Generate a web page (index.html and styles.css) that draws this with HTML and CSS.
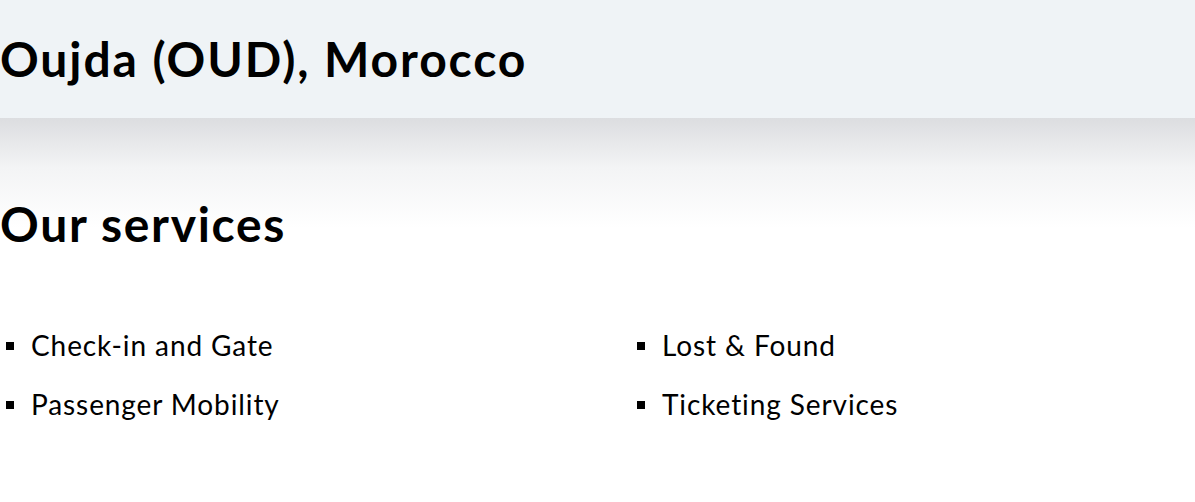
FILE: index.html
```html
<!DOCTYPE html>
<html lang="en">
<head>
<meta charset="utf-8">
<title>Oujda (OUD), Morocco</title>
<link rel="stylesheet" href="styles.css">
</head>
<body>
<header class="hero">
  <h1 class="hero-title">Oujda (OUD), Morocco</h1>
</header>
<main class="services">
  <h2 class="services-title">Our services</h2>
  <ul class="service-list">
    <li class="service-item">Check-in and Gate</li>
    <li class="service-item">Lost &amp; Found</li>
    <li class="service-item">Passenger Mobility</li>
    <li class="service-item">Ticketing Services</li>
  </ul>
</main>
</body>
</html>
```

FILE: styles.css
```css
* { box-sizing: border-box; }
html, body {
  margin: 0;
  padding: 0;
  background: #fff;
  color: #000;
  font-family: "Lato", "Open Sans", sans-serif;
}
.hero {
  height: 118px;
  background: #eff3f6;
  display: flex;
  align-items: center;
}
.hero-title {
  margin: 0;
  font-size: 48px;
  font-weight: 700;
  line-height: 1;
  letter-spacing: 1.9px;
}
.services {
  background: linear-gradient(#dcdde0 0, #f3f4f5 50px, #fff 110px);
  padding-top: 82px;
  min-height: 384px;
}
.services-title {
  margin: 0;
  font-size: 48px;
  font-weight: 700;
  line-height: 1;
  letter-spacing: 1.7px;
}
.service-list {
  list-style: none;
  margin: 82px 0 0;
  padding: 0;
  display: grid;
  grid-template-columns: 631px 1fr;
  row-gap: 28px;
}
.service-item {
  display: flex;
  align-items: center;
  gap: 17px;
  padding-left: 6px;
  font-size: 28px;
  line-height: 31px;
  letter-spacing: 0.9px;
}
.service-item::before {
  content: "";
  width: 8px;
  height: 8px;
  background: #000;
  flex: none;
}
```
